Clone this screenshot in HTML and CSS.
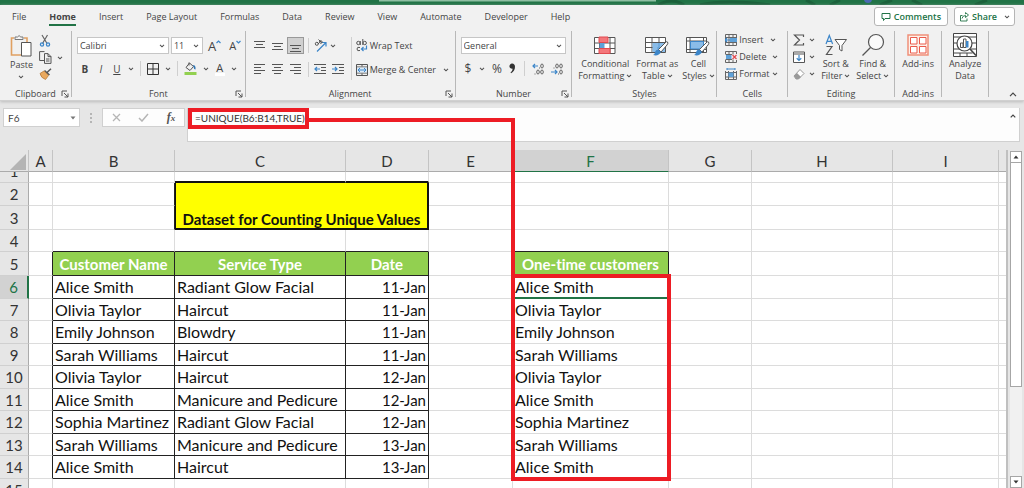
FILE: index.html
```html
<!DOCTYPE html>
<html lang="en">
<head>
<meta charset="utf-8">
<title>Unique values workbook</title>
<link rel="stylesheet" href="styles.css">
</head>
<body>
<svg class="defs" aria-hidden="true">
  <symbol id="caret" viewBox="0 0 6 4"><path d="M1 .8 3 2.8 5 .8" fill="none" stroke="#555" stroke-width="1.1"/></symbol>
  <symbol id="launch" viewBox="0 0 8 8"><path d="M1 6V1h5M3 3l4 4M7 3.500v3.500H3.500" fill="none" stroke="#555"/></symbol>
</svg>

<div class="title-strip"><svg viewBox="0 0 1024 5" preserveAspectRatio="none" aria-hidden="true"><path d="M379 0h277v1.500H379z" fill="#8fbfa3"/><g fill="none" stroke="#1b613b" stroke-width="3"><path d="M658 5q14-8 26 0M700 5q25-6 70 0M806 0l9 5M830 5l10-5M880 5l12-5M912 0l10 5M975 5l12-5"/></g><circle cx="868" cy="-1" r="4" fill="#4b6ab3"/></svg></div>

<header class="ribbon">
  <div class="tabs-row">
    <nav class="tabs">
      <a href="#">File</a><a href="#" class="active">Home</a><a href="#">Insert</a><a href="#">Page Layout</a><a href="#">Formulas</a><a href="#">Data</a><a href="#">Review</a><a href="#">View</a><a href="#">Automate</a><a href="#">Developer</a><a href="#">Help</a>
    </nav>
    <div class="share-area">
      <button class="pill"><svg width="10" height="10" viewBox="0 0 10 10"><path d="M1 1.500h8v5H4L2.500 8.500v-2H1z" fill="none" stroke="#217346"/></svg>Comments</button>
      <button class="pill"><svg width="10" height="10" viewBox="0 0 10 10"><path d="M3.500 3.500h-2v5.500h6.500V6.500M3 6.500Q3.500 3.500 6.500 3.500V5.500L9.500 3 6.500.6v1.600" fill="none" stroke="#217346" stroke-width=".9"/></svg>Share<svg class="caret green" width="6" height="4"><use href="#caret"/></svg></button>
    </div>
  </div>

  <div class="groups">
    <section class="group g-clipboard">
      <div class="body clip-body">
        <button class="big paste"><svg width="22" height="24" viewBox="0 0 22 24"><path d="M4 4H1.500v17H11M14 4h3v4" fill="none" stroke="#e0a061" stroke-width="1.600"/><path d="M5 5.500V3h2.500Q9 .2 10.800 3H13v2.500z" fill="#f5f5f5" stroke="#777"/><path d="M11.500 8.500h9.500v13.500h-9.500z" fill="#fff" stroke="#555"/></svg>Paste<svg class="caret" width="6" height="4"><use href="#caret"/></svg></button>
        <div class="clip-tools">
          <button aria-label="Cut"><svg width="12" height="13" viewBox="0 0 12 13"><path d="M3 1l5 8.500M8.500 1l-5 8.500" stroke="#666" stroke-width="1.200"/><g fill="none" stroke="#3c86c9" stroke-width="1.300"><circle cx="3" cy="10.500" r="1.600"/><circle cx="9" cy="10.500" r="1.600"/></g></svg></button>
          <button aria-label="Copy"><svg width="13" height="13" viewBox="0 0 13 13"><path d="M5 9.500H.6V.6H5.500M5.500 2.600h3.500l3 3V12.400H5.500zM9 2.600v3h3M7 8h3.500M7 10h3.500" fill="none" stroke="#555"/></svg><svg class="caret" width="6" height="4"><use href="#caret"/></svg></button>
          <button aria-label="Format painter"><svg width="13" height="12" viewBox="0 0 13 12"><path d="M12 .8 8 4.500M5.500 2.500l5 4.500" stroke="#555" stroke-width="1.500"/><path d="M5 3 1 5.500q1 4.500 5.500 6L9.500 7.500z" fill="#e9a95f" stroke="#b87b3a" stroke-width=".8"/></svg></button>
        </div>
      </div>
      <div class="caption">Clipboard<button class="launch" aria-label="Clipboard settings"><svg width="8" height="8"><use href="#launch"/></svg></button></div>
    </section>

    <section class="group g-font">
      <div class="body rows">
        <div class="line">
          <span class="combo font-name"><select aria-label="Font"><option>Calibri</option></select><svg class="caret" width="6" height="4"><use href="#caret"/></svg></span>
          <span class="combo font-size"><select aria-label="Font size"><option>11</option></select><svg class="caret" width="6" height="4"><use href="#caret"/></svg></span>
          <button class="grow" aria-label="Increase font size"><span>A</span><svg width="5" height="4" viewBox="0 0 5 4"><path d="M.5 3 2.500 1l2 2" fill="none" stroke="#3c86c9" stroke-width="1.200"/></svg></button>
          <button class="shrink" aria-label="Decrease font size"><span>A</span><svg width="5" height="4" viewBox="0 0 5 4"><path d="M.5 1 2.500 3l2-2" fill="none" stroke="#3c86c9" stroke-width="1.200"/></svg></button>
        </div>
        <div class="line font-line">
          <button class="glyph"><b>B</b></button>
          <button class="glyph"><i>I</i></button>
          <button class="glyph"><u>U</u></button>
          <svg class="caret" width="6" height="4"><use href="#caret"/></svg>
          <span class="bar"></span>
          <button aria-label="Borders"><svg width="12" height="12" viewBox="0 0 12 12"><path d="M.5.5h11v11H.5zM6 .5v11M.5 6h11" fill="none" stroke="#333"/></svg></button>
          <svg class="caret" width="6" height="4"><use href="#caret"/></svg>
          <span class="bar"></span>
          <button aria-label="Fill color"><svg width="13" height="13" viewBox="0 0 13 13"><path d="M5.500 1 2 5.500 6 8.500 9.500 4.500zM5 .5v3" fill="none" stroke="#555"/><path d="M9 3q3 0 2.500 4.500Q9.500 7 9.500 4.500" fill="#2f75b5"/><path d="M.5 10h12v3H.5z" fill="#92d050"/></svg></button>
          <svg class="caret" width="6" height="4"><use href="#caret"/></svg>
          <button class="glyph font-color">A</button>
          <svg class="caret" width="6" height="4"><use href="#caret"/></svg>
        </div>
      </div>
      <div class="caption">Font<button class="launch" aria-label="Font settings"><svg width="8" height="8"><use href="#launch"/></svg></button></div>
    </section>

    <section class="group g-align">
      <div class="body align-body">
        <div class="align-left">
          <div class="line">
            <button aria-label="Top align"><svg width="11" height="12" viewBox="0 0 11 12"><path d="M0 1.500h11M2 4.500h7M0 7.500h11" stroke="#555"/></svg></button>
            <button aria-label="Middle align"><svg width="11" height="12" viewBox="0 0 11 12"><path d="M0 3.500h11M2 6.500h7M0 9.500h11" stroke="#555"/></svg></button>
            <button class="pressed" aria-label="Bottom align"><svg width="11" height="12" viewBox="0 0 11 12"><path d="M0 5.500h11M2 8.500h7M0 11.500h11" stroke="#555"/></svg></button>
            <span class="bar"></span>
            <button aria-label="Orientation"><svg width="13" height="13" viewBox="0 0 13 13"><path d="M3 12.500 11.500 4M8 3.500h4v4" fill="none" stroke="#3c86c9" stroke-width="1.200"/><g fill="none" stroke="#555"><circle cx="2.800" cy="4.800" r="1.500"/><path d="M3 3l2 2M4.500.5l3 3"/><circle cx="6.800" cy="3" r="1.300"/></g></svg></button>
            <svg class="caret" width="6" height="4"><use href="#caret"/></svg>
          </div>
          <div class="line">
            <button aria-label="Align left"><svg width="11" height="11" viewBox="0 0 11 11"><path d="M0 .5h11M0 3.500h7M0 6.500h11M0 9.500h7" stroke="#555"/></svg></button>
            <button aria-label="Center"><svg width="11" height="11" viewBox="0 0 11 11"><path d="M0 .5h11M2 3.500h7M0 6.500h11M2 9.500h7" stroke="#555"/></svg></button>
            <button aria-label="Align right"><svg width="11" height="11" viewBox="0 0 11 11"><path d="M0 .5h11M4 3.500h7M0 6.500h11M4 9.500h7" stroke="#555"/></svg></button>
            <span class="bar"></span>
            <button aria-label="Decrease indent"><svg width="12" height="11" viewBox="0 0 12 11"><path d="M0 .5h12M7 3.500h5M7 6.500h5M0 9.500h12" stroke="#555"/><path d="M6 5H1M3 3 1 5l2 2" fill="none" stroke="#3c86c9" stroke-width="1.200"/></svg></button>
            <button aria-label="Increase indent"><svg width="12" height="11" viewBox="0 0 12 11"><path d="M0 .5h12M7 3.500h5M7 6.500h5M0 9.500h12" stroke="#555"/><path d="M0 5h5M3 3l2 2-2 2" fill="none" stroke="#3c86c9" stroke-width="1.200"/></svg></button>
          </div>
        </div>
        <span class="tall-bar"></span>
        <div class="align-right">
          <button class="label-btn"><svg width="12" height="13" viewBox="0 0 12 13"><g fill="none" stroke="#555"><circle cx="2.400" cy="4" r="1.700"/><path d="M4.300 2v4M6.800 0v6M4 8.500q-3-1-3 1.500t3 1.500"/><circle cx="8.700" cy="4" r="1.700"/></g><path d="M10.500 6.500v3.500H5.500M7.500 8l-2 2 2 2" fill="none" stroke="#3c86c9" stroke-width="1.200"/></svg>Wrap Text</button>
          <button class="label-btn"><svg width="12" height="12" viewBox="0 0 12 12"><path d="M.5.5h11v11H.5zM6 .5v2M6 9.500v2M.5 3h11M.5 9h11" fill="none" stroke="#555"/><path d="M1 3.500h10v5H1z" fill="#dcebf8"/><path d="M2 6h8M4 4 2 6l2 2M8 4l2 2-2 2" fill="none" stroke="#3c86c9"/></svg>Merge &amp; Center<svg class="caret far" width="6" height="4"><use href="#caret"/></svg></button>
        </div>
      </div>
      <div class="caption">Alignment<button class="launch" aria-label="Alignment settings"><svg width="8" height="8"><use href="#launch"/></svg></button></div>
    </section>

    <section class="group g-number">
      <div class="body rows">
        <div class="line"><span class="combo number-format"><select aria-label="Number format"><option>General</option></select><svg class="caret" width="6" height="4"><use href="#caret"/></svg></span></div>
        <div class="line number-line">
          <button class="sign">$</button><svg class="caret" width="6" height="4"><use href="#caret"/></svg>
          <button class="sign">%</button>
          <button aria-label="Comma style"><svg width="7" height="11" viewBox="0 0 7 11"><path d="M3.200.6a2.600 2.600 0 1 0 .5 5.100Q3.500 8 1.500 9.500l.6.8Q6 8 6 3.800 5.800.8 3.200.6" fill="#333"/></svg></button>
          <span class="bar"></span>
          <button aria-label="Increase decimal"><svg width="12" height="12" viewBox="0 0 12 12"><path d="M6 3H1M3 1 1 3l2 2" fill="none" stroke="#3c86c9" stroke-width="1.200"/><g fill="none" stroke="#666"><ellipse cx="10" cy="3" rx="1.300" ry="2"/><ellipse cx="6" cy="9" rx="1.300" ry="2"/><ellipse cx="10" cy="9" rx="1.300" ry="2"/><path d="M7 5h1M2.500 11h1"/></g></svg></button>
          <button aria-label="Decrease decimal"><svg width="12" height="12" viewBox="0 0 12 12"><path d="M0 9h6M4 7l2 2-2 2" fill="none" stroke="#3c86c9" stroke-width="1.200"/><g fill="none" stroke="#666"><ellipse cx="6" cy="3" rx="1.300" ry="2"/><ellipse cx="10" cy="3" rx="1.300" ry="2"/><ellipse cx="10" cy="9" rx="1.300" ry="2"/><path d="M2.500 5h1M7 11h1"/></g></svg></button>
        </div>
      </div>
      <div class="caption">Number<button class="launch" aria-label="Number settings"><svg width="8" height="8"><use href="#launch"/></svg></button></div>
    </section>

    <section class="group g-styles">
      <div class="body bigs">
        <button class="big"><svg width="22" height="22" viewBox="0 0 22 22"><path d="M.5 3.500h20.500v16H.5zM.5 9h20.500M.5 14.500h20.500M5.500 3.500v16M16 3.500v16" fill="#fff" stroke="#555"/><path d="M5 3h9v5.500H5z" fill="#f4777b" stroke="#e04b50"/><path d="M5.500 9h5v5h-5z" fill="#5ea1d8"/><path d="M5 14.500h11v5H5z" fill="#f4777b" stroke="#e04b50"/></svg><span>Conditional</span><span>Formatting<svg class="caret" width="6" height="4"><use href="#caret"/></svg></span></button>
        <button class="big"><svg width="24" height="22" viewBox="0 0 24 22"><path d="M.5 3.500h20v15H.5zM.5 8.500h20M.5 13.500h20M7 3.500v15M14 3.500v15" fill="#fff" stroke="#555"/><path d="M7.500 9h12.500v9H7.500z" fill="#8abce8"/><path d="M12 14l8 0M14 9v9" stroke="#5b9bd5"/><path d="M22.500 8q-1-1-2.500 1l-6.500 6.500 2.500 2.500 6-7q1.500-2 .5-3z" fill="#fff" stroke="#555"/><path d="M13.500 15.500q-3 0-3.500 3-.5 2-2 2.500 5.500 1.500 8-3z" fill="#3c86c9"/></svg><span>Format as</span><span>Table<svg class="caret" width="6" height="4"><use href="#caret"/></svg></span></button>
        <button class="big"><svg width="24" height="22" viewBox="0 0 24 22"><path d="M.5 3.500h20v15H.5zM.5 7h20M.5 15.500h20M4 3.500v15M17.500 3.500v15" fill="#fff" stroke="#555"/><path d="M4.500 7.500h13v7.500h-13z" fill="#8abce8" stroke="#3c86c9"/><path d="M22.500 8q-1-1-2.500 1l-6.500 6.500 2.500 2.500 6-7q1.500-2 .5-3z" fill="#fff" stroke="#555"/><path d="M13.500 15.500q-3 0-3.500 3-.5 2-2 2.500 5.500 1.500 8-3z" fill="#3c86c9"/></svg><span>Cell</span><span>Styles<svg class="caret" width="6" height="4"><use href="#caret"/></svg></span></button>
      </div>
      <div class="caption">Styles</div>
    </section>

    <section class="group g-cells">
      <div class="body stack">
        <button class="label-btn"><svg width="12" height="12" viewBox="0 0 12 12"><path d="M.5.5h11v11H.5zM.5 3.500h11M.5 8.500h11M4 .5v11M8 .5v11" fill="none" stroke="#666"/><path d="M5 4h7v4H5z" fill="#5ea1d8"/><path d="M5 6H0M2 4 0 6l2 2" fill="none" stroke="#3c86c9" stroke-width="1.200"/></svg>Insert<svg class="caret far" width="6" height="4"><use href="#caret"/></svg></button>
        <button class="label-btn"><svg width="12" height="12" viewBox="0 0 12 12"><path d="M.5 3V.5h11V3M.5 9v2.500h11V9M.5 3.500H7M.5 8.500H7M4 .5v3M8 .5v3M4 8.500v3M8 8.500v3" fill="none" stroke="#666"/><path d="M1 4h5.500v4H1z" fill="#5ea1d8"/><path d="M7.500 4l4 4M11.500 4l-4 4" stroke="#e04b50" stroke-width="1.200"/></svg>Delete<svg class="caret far" width="6" height="4"><use href="#caret"/></svg></button>
        <button class="label-btn"><svg width="12" height="12" viewBox="0 0 12 12"><path d="M.5 3v8.500h11V3M.5 4.500h11M.5 9h11M3.500 3v8.500M8.500 3v8.500" fill="none" stroke="#666"/><path d="M3.500 4.500h5v4.500h-5z" fill="#5ea1d8"/><path d="M2 1h8M2 0v2M10 0v2" stroke="#3c86c9"/></svg>Format<svg class="caret" width="6" height="4"><use href="#caret"/></svg></button>
      </div>
      <div class="caption">Cells</div>
    </section>

    <section class="group g-editing">
      <div class="body bigs">
        <div class="stack edit-stack">
          <button aria-label="AutoSum"><svg width="12" height="12" viewBox="0 0 12 12"><path d="M10.500 3V1H1.500l5 5-5 5h9V9" fill="none" stroke="#555" stroke-width="1.200"/></svg><svg class="caret" width="6" height="4"><use href="#caret"/></svg></button>
          <button aria-label="Fill"><svg width="12" height="12" viewBox="0 0 12 12"><path d="M.5 1h11v10.500H.5zM.5 3h11" fill="#fff" stroke="#555"/><path d="M6 4v5.500M3.700 7.300 6 9.500l2.300-2.200" fill="none" stroke="#3c86c9" stroke-width="1.200"/></svg><svg class="caret" width="6" height="4"><use href="#caret"/></svg></button>
          <button aria-label="Clear"><svg width="12" height="12" viewBox="0 0 12 12"><path d="M7 1.500 11 5.500 5.500 11H3L1 8z" fill="#fff" stroke="#999"/><path d="M4 5l4 4-2.500 2H3L1 8z" fill="#999"/></svg><svg class="caret" width="6" height="4"><use href="#caret"/></svg></button>
        </div>
        <button class="big"><svg width="22" height="22" viewBox="0 0 22 22"><path d="M1 10 4.300 1.500 7.600 10M2 7.300h4.600" fill="none" stroke="#3c86c9" stroke-width="1.200"/><path d="M1.500 12.500h5.500L1.500 20.500h6" fill="none" stroke="#555" stroke-width="1.200"/><path d="M10 5.500h11.500l-4.500 6v5.500l-2.500-1.500v-4z" fill="#fff" stroke="#555"/></svg><span>Sort &amp;</span><span>Filter<svg class="caret" width="6" height="4"><use href="#caret"/></svg></span></button>
        <button class="big"><svg width="24" height="24" viewBox="0 0 24 24"><circle cx="15" cy="9" r="7.500" fill="#fafafa" stroke="#555" stroke-width="1.200"/><path d="M9.500 14.500 1.500 22.500" stroke="#555" stroke-width="1.300"/></svg><span>Find &amp;</span><span>Select<svg class="caret" width="6" height="4"><use href="#caret"/></svg></span></button>
      </div>
      <div class="caption">Editing</div>
    </section>

    <section class="group g-addins">
      <div class="body bigs">
        <button class="big"><svg width="22" height="22" viewBox="0 0 22 22"><path d="M1 1h20v20H1z" fill="#fdf1ea" stroke="#f0907a" stroke-width="1.500"/><path d="M3.500 3.500h6.500v6.500H3.500zM12.500 3.500H19v6.500h-6.500zM3.500 12.500h6.500V19H3.500zM12.500 12.500H19V19h-6.500z" fill="#fff" stroke="#ea5a4b"/></svg><span>Add-ins</span></button>
      </div>
      <div class="caption">Add-ins</div>
    </section>

    <section class="group g-analyze">
      <div class="body bigs">
        <button class="big"><svg width="24" height="24" viewBox="0 0 24 24"><path d="M.5.5h23v23H.5zM.5 4h23M.5 10h5M.5 16h7M.5 20h19M18 16h5.500M18 10h5.500M7 20v3.500M14 20v3.500" fill="#fff" stroke="#444"/><circle cx="11.500" cy="10.500" r="7.500" fill="#fff" stroke="#444" stroke-width="1.200"/><path d="M17 16l6 6.500" stroke="#444" stroke-width="1.600"/><path d="M7.500 10h2.500v4.500H7.500zM10.500 6h2.500v8.500h-2.500z" fill="#fff" stroke="#555"/><path d="M13 8h2.500v6.500H13z" fill="#3c86c9"/></svg><span>Analyze</span><span>Data</span></button>
      </div>
      <div class="caption"></div>
    </section>

    <div class="collapse"><button aria-label="Collapse ribbon"><svg width="8" height="5" viewBox="0 0 8 5"><path d="M1 4.200 4 1.200l3 3" fill="none" stroke="#444" stroke-width="1.200"/></svg></button></div>
  </div>
</header>

<div class="formula-row">
  <span class="combo name-box"><input type="text" value="F6" aria-label="Name box"><svg width="6" height="4" viewBox="0 0 6 4"><path d="M.5.5h5L3 3.500z" fill="#777"/></svg></span>
  <svg class="dots" width="2" height="10" viewBox="0 0 2 10"><path d="M0 0h2v2H0zM0 4h2v2H0zM0 8h2v2H0z" fill="#b5b5b5"/></svg>
  <div class="fx-box">
    <button aria-label="Cancel"><svg width="9" height="9" viewBox="0 0 9 9"><path d="M1 1l7 7M8 1 1 8" stroke="#b5b5b5" stroke-width="1.300"/></svg></button>
    <button aria-label="Enter"><svg width="11" height="9" viewBox="0 0 11 9"><path d="M1 5l3 3 6-7" fill="none" stroke="#b5b5b5" stroke-width="1.500"/></svg></button>
    <button class="fx" aria-label="Insert function">f<small>x</small></button>
  </div>
  <div class="formula-bar">
    <span class="formula">=UNIQUE(B6:B14,TRUE)</span>
    <button aria-label="Collapse formula bar"><svg width="6" height="4" viewBox="0 0 6 4"><path d="M.7 3.300 3 1l2.300 2.300" fill="none" stroke="#444" stroke-width="1.200"/></svg></button>
  </div>
</div>

<main class="sheet-area">
  <div class="sheet">
    <table>
      <colgroup><col class="c-num"><col class="c-a"><col class="c-b"><col class="c-c"><col class="c-d"><col class="c-e"><col class="c-f"><col class="c-g"><col class="c-h"><col class="c-i"><col></colgroup>
      <thead><tr><th class="corner"><svg width="16" height="16" viewBox="0 0 16 16"><path d="M16 0v16H0z" fill="#b4b4b4"/></svg></th><th>A</th><th>B</th><th>C</th><th>D</th><th>E</th><th class="sel">F</th><th>G</th><th>H</th><th>I</th><th></th></tr></thead>
      <tbody>
        <tr class="r1"><th><div>1</div></th><td></td><td></td><td class="ut"></td><td class="ut"></td><td></td><td></td><td></td><td></td><td></td><td></td></tr>
        <tr class="mid"><th>2</th><td></td><td class="ur"></td><td class="title" colspan="2" rowspan="2">Dataset for Counting Unique Values</td><td></td><td></td><td></td><td></td><td></td><td></td></tr>
        <tr class="tall"><th>3</th><td></td><td class="ur"></td><td></td><td></td><td></td><td></td><td></td><td></td></tr>
        <tr class="low"><th>4</th><td></td><td class="ub"></td><td class="ub"></td><td class="ub"></td><td></td><td class="ub"></td><td></td><td></td><td></td><td></td></tr>
        <tr class="tall"><th>5</th><td class="ur"></td><td class="h">Customer Name</td><td class="h">Service Type</td><td class="h">Date</td><td></td><td class="h">One-time customers</td><td></td><td></td><td></td><td></td></tr>
        <tr class="mid"><th class="sel">6</th><td class="ur"></td><td class="d">Alice Smith</td><td class="d">Radiant Glow Facial</td><td class="d n">11-Jan</td><td></td><td class="o current">Alice Smith</td><td></td><td></td><td></td><td></td></tr>
        <tr class="low"><th>7</th><td class="ur"></td><td class="d">Olivia Taylor</td><td class="d">Haircut</td><td class="d n">11-Jan</td><td></td><td class="o">Olivia Taylor</td><td></td><td></td><td></td><td></td></tr>
        <tr class="mid"><th>8</th><td class="ur"></td><td class="d">Emily Johnson</td><td class="d">Blowdry</td><td class="d n">11-Jan</td><td></td><td class="o">Emily Johnson</td><td></td><td></td><td></td><td></td></tr>
        <tr class="low"><th>9</th><td class="ur"></td><td class="d">Sarah Williams</td><td class="d">Haircut</td><td class="d n">11-Jan</td><td></td><td class="o">Sarah Williams</td><td></td><td></td><td></td><td></td></tr>
        <tr class="mid"><th>10</th><td class="ur"></td><td class="d">Olivia Taylor</td><td class="d">Haircut</td><td class="d n">12-Jan</td><td></td><td class="o">Olivia Taylor</td><td></td><td></td><td></td><td></td></tr>
        <tr class="low"><th>11</th><td class="ur"></td><td class="d">Alice Smith</td><td class="d">Manicure and Pedicure</td><td class="d n">12-Jan</td><td></td><td class="o">Alice Smith</td><td></td><td></td><td></td><td></td></tr>
        <tr class="mid"><th>12</th><td class="ur"></td><td class="d">Sophia Martinez</td><td class="d">Radiant Glow Facial</td><td class="d n">12-Jan</td><td></td><td class="o">Sophia Martinez</td><td></td><td></td><td></td><td></td></tr>
        <tr class="low"><th>13</th><td class="ur"></td><td class="d">Sarah Williams</td><td class="d">Manicure and Pedicure</td><td class="d n">13-Jan</td><td></td><td class="o">Sarah Williams</td><td></td><td></td><td></td><td></td></tr>
        <tr class="mid"><th>14</th><td class="ur"></td><td class="d">Alice Smith</td><td class="d">Haircut</td><td class="d n">13-Jan</td><td></td><td class="o">Alice Smith</td><td></td><td></td><td></td><td></td></tr>
        <tr class="mid"><th>15</th><td></td><td></td><td></td><td></td><td></td><td></td><td></td><td></td><td></td><td></td></tr>
      </tbody>
    </table>
  </div>
  <div class="scroll">
    <button aria-label="Scroll up"><svg width="6" height="4" viewBox="0 0 6 4"><path d="M3 .5 5.500 3.500h-5z" fill="#333"/></svg></button>
    <div class="thumb"></div>
    <div class="track"></div>
    <button aria-label="Scroll down"><svg width="6" height="4" viewBox="0 0 6 4"><path d="M3 3.500.5.500h5z" fill="#333"/></svg></button>
  </div>
</main>
<div class="connector"></div>
<div class="result-outline"></div>
</body>
</html>
```
FILE: styles.css
```css
* { box-sizing: border-box; }
body {
  margin: 0;
  height: 100vh;
  display: flex;
  flex-direction: column;
  overflow: hidden;
  position: relative;
  background: #e6e6e6;
  color: #444;
  font: 9px/12px "Open Sans", "Noto Sans", sans-serif;
}
button, select, input { font: inherit; color: inherit; }
button {
  border: 0;
  padding: 0;
  background: none;
  display: flex;
  align-items: center;
  justify-content: center;
  white-space: nowrap;
}
svg { display: block; flex: none; }
.defs { position: absolute; width: 0; height: 0; }

.title-strip { height: 5px; background: #217346; }
.title-strip svg { width: 100%; height: 5px; }

/* Ribbon */
.ribbon { background: #f1f1f1; border-bottom: 1px solid #d0d0d0; box-shadow: 0 1px 3px #bbb; }
.tabs-row { display: flex; justify-content: space-between; height: 26px; padding: 2px 9px 0 12px; }
.tabs { display: flex; gap: 23px; }
.tabs a {
  color: #444;
  text-decoration: none;
  height: 19px;
  padding-top: 4px;
  border-bottom: 2px solid transparent;
  white-space: nowrap;
}
.tabs .active { font-weight: 700; border-color: #217346; }
.share-area { display: flex; gap: 6px; }
.pill {
  height: 19px;
  gap: 3px;
  padding: 0 6px;
  border: 1px solid #b5b5b5;
  border-radius: 3px;
  background: #fff;
  color: #217346;
  font-weight: 600;
}
.pill + .pill { padding: 0 4px; }
.pill .caret { margin-left: 4px; }

.groups { display: flex; height: 69px; }
.group { display: flex; flex-direction: column; border-right: 1px solid #b8b8b8; margin-bottom: 3px; min-width: 0; }
.g-clipboard { flex: 71 1 0; }
.g-font { flex: 173 1 0; }
.g-align { flex: 209 1 0; }
.g-number { flex: 116 1 0; }
.g-styles { flex: 144 1 0; }
.g-cells { flex: 70 1 0; }
.g-editing { flex: 106 1 0; }
.g-addins { flex: 46 1 0; }
.g-analyze { flex: 46 1 0; }
.collapse { flex: 28 1 0; display: flex; align-items: flex-end; justify-content: flex-end; padding: 0 7px 3px 0; }
.body { flex: 1; min-height: 0; }
.caption { position: relative; height: 12px; text-align: center; line-height: 12px; margin-bottom: -3px; }
.launch { position: absolute; right: 2px; top: 2px; }

.big { flex-direction: column; justify-content: flex-start; line-height: 12px; }
.big > svg:first-child { margin-bottom: 1px; height: 24px; }
.big span { display: flex; align-items: center; gap: 2px; }
.bigs { display: flex; justify-content: center; padding-top: 2px; gap: 6px; }
.g-styles .bigs { gap: 4px; padding-left: 4px; }

.clip-body { display: flex; padding: 3px 0 0 10px; gap: 6px; }
.paste .caret { margin-top: 4px; }
.clip-tools { display: flex; flex-direction: column; gap: 4px; align-items: flex-start; }
.clip-tools button { gap: 5px; }

.rows { padding: 6px 0 0 5px; display: flex; flex-direction: column; gap: 6px; }
.line { display: flex; align-items: center; height: 17px; }
.combo { display: flex; align-items: center; background: #fff; border: 1px solid #c6c6c6; height: 17px; padding-right: 3px; }
.combo select, .combo input { appearance: none; border: 0; background: none; flex: 1; min-width: 0; padding: 0 0 0 2px; height: 15px; outline: 0; }
.font-name { width: 92px; }
.font-size { width: 32px; margin-left: 2px; }
.number-format { width: 105px; }
.grow, .shrink { align-items: flex-start; margin-left: 5px; line-height: 12px; }
.grow { font-size: 13px; }
.shrink { font-size: 11px; margin-left: 8px; }
.bar { width: 1px; height: 15px; background: #cfcfcf; flex: none; }
.tall-bar { width: 1px; height: 43px; background: #cfcfcf; }
.font-line { justify-content: space-between; padding: 0 8px 0 3px; }
.glyph { font-size: 10px; width: 10px; }
.font-color { border-bottom: 3px solid #fff; height: 14px; font-size: 11px; line-height: 11px; }

.align-body { display: flex; padding: 6px 0 0 5px; gap: 4px; }
.align-left, .align-right { display: flex; flex-direction: column; gap: 7px; }
.align-left .line { gap: 1px; }
.align-left .line button { width: 17px; height: 17px; }
.align-left .pressed { background: #d0d0d0; border: 1px solid #999; }
.align-left .bar { margin: 0 2px 0 3px; }
.label-btn { gap: 2px; height: 17px; justify-content: flex-start; }
.far { margin-left: 4px; }
.g-align .label-btn .caret { margin-left: 5px; }

.number-line { justify-content: space-between; padding: 0 8px 0 4px; }
.sign { font-size: 12px; }

.stack { display: flex; flex-direction: column; padding: 0 0 0 8px; }
.edit-stack { padding: 0; margin-top: -2px; }
.edit-stack button { gap: 4px; height: 17px; }

/* Name box and formula bar */
.formula-row { display: flex; align-items: flex-start; padding: 6px 4px 8px 3px; margin-top: 1px; font-family: Lato, "Open Sans", sans-serif; font-size: 10px; }
.name-box { width: 77px; height: 19px; border-color: #d0d0d0; }
.name-box input { padding-left: 4px; }
.dots { margin: 5px 10px 0; }
.fx-box { display: flex; align-items: center; justify-content: space-around; width: 83px; height: 19px; border: 1px solid #d0d0d0; background: #fdfdfd; }
.fx { font: italic 700 12px/14px "Liberation Serif", serif; align-items: baseline; color: #555; }
.fx small { font-size: 9px; }
.formula-bar { flex: 1; display: flex; justify-content: space-between; align-items: flex-start; height: 34px; margin-left: 2px; border: 1px solid #d0d0d0; border-top-width: 0; background: #fdfdfd; padding-right: 3px; }
.formula { border: 4px solid #ed1c24; line-height: 13px; padding: 0 0 0 3px; color: #333; }
.formula-bar button { margin-top: 6px; }

/* Worksheet */
.sheet-area { flex: 1; min-height: 0; display: flex; }
.sheet { flex: 1; overflow: hidden; border-right: 2px solid #c0c0c0; }
table { width: 100%; table-layout: fixed; border-collapse: separate; border-spacing: 0; font: 15px/18px Lato, "Open Sans", sans-serif; font-variant-ligatures: none; color: #111; }
.c-num { width: 29px; } .c-a { width: 24px; } .c-b { width: 122px; } .c-c { width: 171px; } .c-d { width: 83px; }
.c-e { width: 84px; } .c-f { width: 156px; } .c-g { width: 83px; } .c-h { width: 141px; } .c-i { width: 106px; }
th, td { padding: 0; white-space: nowrap; overflow: hidden; }
td { background: #fff; border-right: 1px solid #dcdcdc; border-bottom: 1px solid #dcdcdc; }
td:last-child { border-right: 0; }
th { font-weight: 400; color: #333; background: #e6e6e6; text-align: center; }
thead th { height: 22px; border-right: 1px solid #c4c4c4; border-bottom: 1px solid #ababab; }
thead th:last-child { border-right: 0; }
.corner svg { margin: 2px 0 0 10px; }
tbody th { border-right: 1px solid #ababab; border-bottom: 1px solid #d0d0d0; }
.sel { background: #d2d2d2; color: #217346; }
thead .sel { border-bottom: 1px solid #217346; }
tbody .sel { border-right: 2px solid #217346; }
.r1 { height: 11px; }
.r1 div { height: 10px; display: flex; align-items: flex-end; justify-content: center; line-height: 22px; overflow: hidden; }
.mid { height: 23px; }
.low { height: 22px; }
.tall { height: 24px; }
.ur { border-right-color: #222; }
.ub { border-bottom-color: #222; }
.ut { border-bottom: 2px solid #111; }
.title { background: #ff0; border: 2px solid #111; border-top: 0; border-left-width: 1px; text-align: center; vertical-align: bottom; font-weight: 700; }
.h { background: #92d050; color: #fff; font-weight: 700; text-align: center; border-color: #222; }
.d, .o { font-size: 16px; padding-left: 2px; }
.d { border-color: #222; }
.n { font-size: 15px; text-align: right; padding-right: 2px; }
.current { border-bottom: 2px solid #217346; }

.scroll { width: 16px; padding: 1px 2px 0; display: flex; flex-direction: column; }
.scroll button, .thumb { border: 1px solid #a6a6a6; background: #fff; }
.scroll button { height: 12px; flex: none; }
.thumb { flex: 225 1 0; border-top: 0; }
.track { flex: 90 1 0; background: #f1f1f1; }

/* Callout drawn over the sheet */
.connector { position: absolute; left: 308px; top: 118px; width: 207px; height: 157px; border: 4px solid #ed1c24; border-left: 0; border-bottom: 0; }
.result-outline { position: absolute; left: 511px; top: 274px; width: 160px; height: 207px; border: 4px solid #ed1c24; }
```
